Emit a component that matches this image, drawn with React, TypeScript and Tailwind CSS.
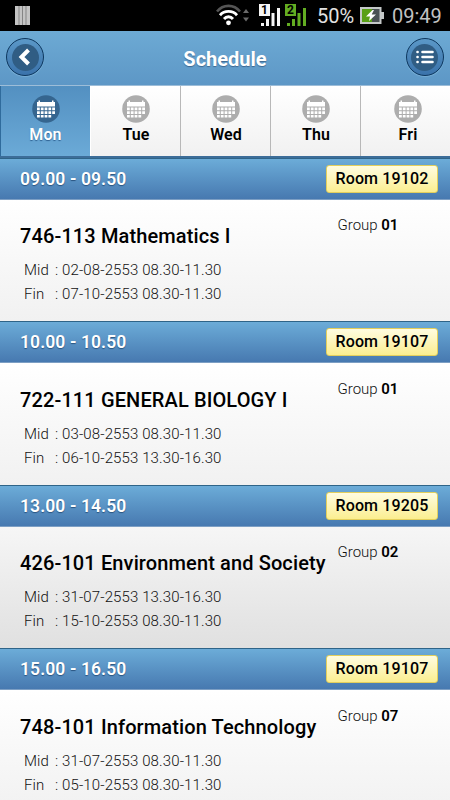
import clsx from 'clsx';

const days = ['Mon', 'Tue', 'Wed', 'Thu', 'Fri'];

const classes = [
    { time: '09.00 - 09.50', room: '19102', name: '746-113 Mathematics I', group: '01', mid: '02-08-2553 08.30-11.30', fin: '07-10-2553 08.30-11.30' },
    { time: '10.00 - 10.50', room: '19107', name: '722-111 GENERAL BIOLOGY I', group: '01', mid: '03-08-2553 08.30-11.30', fin: '06-10-2553 13.30-16.30' },
    { time: '13.00 - 14.50', room: '19205', name: '426-101 Environment and Society', group: '02', mid: '31-07-2553 13.30-16.30', fin: '15-10-2553 08.30-11.30', pressed: true },
    { time: '15.00 - 16.50', room: '19107', name: '748-101 Information Technology', group: '07', mid: '31-07-2553 08.30-11.30', fin: '05-10-2553 08.30-11.30' },
];

function Signal({ sim, color }: { sim: string; color: string }) {
    return (
        <svg width="22" height="23" viewBox="0 0 22 23" fill={color}>
            <rect x="0" y="0" width="11" height="12" />
            <text x="5.5" y="10" textAnchor="middle" fontSize="12" fontWeight="700" fill="#000" className="font-['Roboto',sans-serif]">{sim}</text>
            <rect x="2" y="19" width="3" height="3" />
            <rect x="7" y="15" width="3" height="7" />
            <rect x="12.5" y="9" width="3" height="13" />
            <rect x="18" y="4" width="3" height="18" />
        </svg>
    );
}

function StatusBar() {
    return (
        <div className="flex h-[31px] items-start bg-black">
            <svg width="15" height="19" className="mt-1.5 ml-[15px]">
                <rect width="15" height="19" fill="#c4c4c4" />
                <path d="M4 0v19M7.5 0v19M11 0v19" stroke="#858585" />
            </svg>
            <svg width="34" height="22" viewBox="0 0 34 22" fill="none" className="mt-1 ml-[186px]">
                <path d="M1 7.5C7 0 18 0 24 7.5" stroke="#555" strokeWidth="2.6" />
                <path d="M4 11.2c4.5-5 12.5-5 17 0M8 15c2.5-3 6.5-3 9 0" stroke="#fff" strokeWidth="2.8" />
                <circle cx="12.5" cy="18.8" r="2.4" fill="#fff" />
                <path d="M27 9l3-4 3 4zM27 13.5l3 4 3-4z" fill="#6a6a6a" />
            </svg>
            <div className="mt-1 ml-[9px] flex gap-1">
                <Signal sim="1" color="#f5f5f5" />
                <Signal sim="2" color="#63ad22" />
            </div>
            <span className="ml-[10px] w-[41px] text-[20px] leading-[32px] text-[#e2e2e2]">50%</span>
            <svg width="24" height="17" className="mt-[7px] ml-[2px]">
                <rect x="1" y="1" width="19.5" height="15" fill="#4a5154" stroke="#c4c8c8" strokeWidth="2" />
                <rect x="2" y="2" width="10" height="13" fill="#59a017" />
                <rect x="21" y="5" width="3" height="7" fill="#c4c8c8" />
                <path d="M12.5 3L6 9.5h4L9 14l7-6.5h-4.3L14 3z" fill="#fff" />
            </svg>
            <span className="ml-[8px] text-[20px] leading-[32px] text-[#c2c2c2]">09:49</span>
        </div>
    );
}

function RoundButton({ children }: { children: React.ReactNode }) {
    return (
        <button className="mb-[2px] flex size-[38px] items-center justify-center rounded-full border border-[#0c365e] bg-linear-to-b from-[#5b98c8] to-[#3b73ab] shadow-[0_1px_1px_#79afd5]">
            <span className="flex size-[27px] items-center justify-center rounded-full bg-[#305d84]">{children}</span>
        </button>
    );
}

function CalendarIcon({ active }: { active: boolean }) {
    return (
        <svg width="28" height="28" viewBox="0 0 28 28">
            <circle cx="14" cy="14" r="13.8" fill={active ? '#35658f' : '#adadad'} />
            <path d="M5 7h1.5V5.5H8V7h12V5.5h1.5V7H23v4.500H5z" fill="#fff" />
            <path
                d="M5 12.500h2.800v2.700H5zM8.800 12.500h2.800v2.700H8.800zM12.600 12.500h2.800v2.700h-2.800zM16.400 12.500h2.800v2.700h-2.800zM20.200 12.500H23v2.700h-2.800zM5 16.200h2.800v2.700H5zM8.800 16.200h2.800v2.700H8.800zM12.600 16.200h2.800v2.700h-2.800zM16.400 16.200h2.800v2.700h-2.800zM20.200 16.200H23v2.700h-2.800zM5 19.900h2.800v2.700H5zM8.800 19.900h2.800v2.700H8.800zM12.600 19.900h2.800v2.700h-2.800zM16.400 19.900h2.800v2.700h-2.800z"
                fill="#fff"
            />
        </svg>
    );
}

export default function App() {
    return (
        <div className="h-[800px] w-[450px] overflow-hidden bg-white font-['Roboto',sans-serif] text-black">
            <StatusBar />
            <header className="flex h-[54px] items-center justify-between bg-linear-to-b from-[#6daad4] to-[#5d97c6] pr-[6px] pl-[6px]">
                <RoundButton>
                    <svg width="14" height="18" viewBox="0 0 14 18" fill="none" stroke="#fff" strokeWidth="4">
                        <path d="M10.5 2L3.5 9l7 7" />
                    </svg>
                </RoundButton>
                <h1 className="mt-0.5 text-[20px] font-bold text-white [text-shadow:0_1px_1px_#3e6790]">Schedule</h1>
                <RoundButton>
                    <svg width="18" height="14" viewBox="0 0 18 14" stroke="#fff" strokeWidth="2.6" strokeLinecap="round">
                        <path d="M6.5 2h10M6.5 7h10M6.5 12h10M1.5 2h.1M1.5 7h.1M1.5 12h.1" />
                    </svg>
                </RoundButton>
            </header>
            <nav className="grid h-[72.5px] grid-cols-5 border-t border-b-2 border-t-[#9dbdd8] border-b-[#3c6d99]">
                {days.map((day, i) => (
                    <a
                        key={day}
                        className={clsx(
                            'flex flex-col items-center border-l pt-[9px]',
                            i === 0
                                ? 'border-[#2f6b9c] bg-linear-to-b from-[#5390c1] to-[#6baad7] text-white [text-shadow:0_1px_1px_#2e6293]'
                                : 'bg-linear-to-b from-white to-[#f1f1f1]',
                            i === 1 && 'border-white pl-px',
                            i > 1 && 'border-[#b8b8b8]',
                            i > 1 && i < 4 && 'pl-px',
                            i === 4 && 'pl-[5px]'
                        )}
                    >
                        <CalendarIcon active={i === 0} />
                        <span className="mt-px text-[16px] leading-[21px] font-semibold tracking-[0.1px]">{day}</span>
                    </a>
                ))}
            </nav>
            {classes.map((c) => (
                <section key={c.time} className="h-[163.5px]">
                    <div className="flex h-[42px] items-center justify-between border-y border-t-[#2f6488] border-b-[#7d9fc4] bg-linear-to-b from-[#6cacd8] to-[#4779b0] pr-[12px] pl-[20px]">
                        <span className="pt-px text-[17.5px] font-semibold tracking-[0.1px] text-white [text-shadow:0_1px_1px_#2a5480]">{c.time}</span>
                        <span className="flex h-[28px] w-[112px] items-center justify-center rounded-[3px] border border-[#e3cf5c] bg-linear-to-b from-[#fffce0] to-[#fbee8f] text-[16px] font-medium tracking-[0.15px]">
                            Room {c.room}
                        </span>
                    </div>
                    <div className={clsx('flex h-[121.5px] bg-linear-to-b', c.pressed ? 'from-[#f6f6f6] to-[#e0e0e0]' : 'from-white to-[#f1f1f1]')}>
                        <div className="w-[337.5px] pt-[23.7px] pl-[20px] whitespace-nowrap">
                            <h2 className="text-[20px] leading-[26px] font-[550] tracking-[0.12px]">{c.name}</h2>
                            <div className="mt-[9.3px] grid grid-cols-[31px_1fr] pl-[4px] text-[15px] leading-[24px] font-[350] tracking-[0.12px] text-[#111]">
                                <span>Mid</span>
                                <span>: {c.mid}</span>
                                <span>Fin</span>
                                <span>: {c.fin}</span>
                            </div>
                        </div>
                        <div className="pt-[14.7px] text-[15px] leading-[22px] font-[350] text-[#111]">
                            Group <b className="font-semibold text-black">{c.group}</b>
                        </div>
                    </div>
                </section>
            ))}
        </div>
    );
}
